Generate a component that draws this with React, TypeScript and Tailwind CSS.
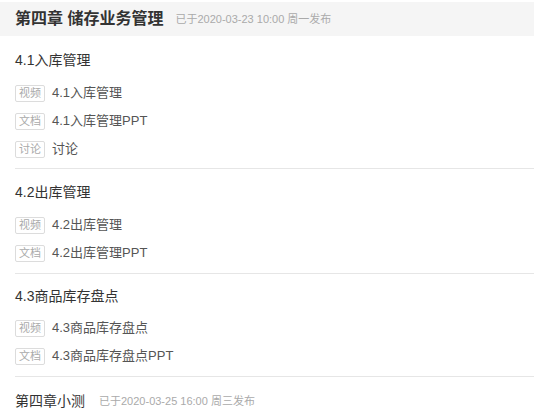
const font = { fontFamily: '"Liberation Sans", "Noto Sans CJK SC", sans-serif' }

type Item = { tag: string; title: string }
type Section = { title: string; items: Item[]; pt: string; mb: string; mt: string }

const sections: Section[] = [
  {
    title: '4.1入库管理',
    pt: 'pt-[14px]',
    mb: 'mb-[9px]',
    mt: 'mt-[5px]',
    items: [
      { tag: '视频', title: '4.1入库管理' },
      { tag: '文档', title: '4.1入库管理PPT' },
      { tag: '讨论', title: '讨论' },
    ],
  },
  {
    title: '4.2出库管理',
    pt: 'pt-[13px]',
    mb: 'mb-[9px]',
    mt: 'mt-[6px]',
    items: [
      { tag: '视频', title: '4.2出库管理' },
      { tag: '文档', title: '4.2出库管理PPT' },
    ],
  },
  {
    title: '4.3商品库存盘点',
    pt: 'pt-[12px]',
    mb: 'mb-[8px]',
    mt: 'mt-[6px]',
    items: [
      { tag: '视频', title: '4.3商品库存盘点' },
      { tag: '文档', title: '4.3商品库存盘点PPT' },
    ],
  },
]

function Row({ item }: { item: Item }) {
  return (
    <div className="flex h-[28px] items-center">
      <span className="flex h-[17px] w-[30px] items-center justify-center rounded-[2px] border border-[#dcdcdc] text-[11px] leading-none text-[#aaaaaa]">
        {item.tag}
      </span>
      <span className="ml-[7px] text-[13px] text-[#555555]">{item.title}</span>
    </div>
  )
}

export default function App() {
  return (
    <div className="h-[420px] w-[534px] overflow-hidden bg-white" style={font}>
      {/* 章节头 */}
      <div className="mt-[2px] flex h-[34px] items-center bg-[#f5f5f5] pl-[15px]">
        <span className="text-[16px] font-bold text-[#333333]">第四章 储存业务管理</span>
        <span className="ml-[12px] text-[11px] text-[#aaaaaa]">已于2020-03-23 10:00 周一发布</span>
      </div>

      <div className="pl-[15px]">
        {sections.map((s, i) => (
          <div key={i} className={s.pt}>
            <div className={`${s.mb} h-[20px] text-[14px] leading-[20px] text-[#333333]`}>{s.title}</div>
            {s.items.map((it, j) => (
              <Row key={j} item={it} />
            ))}
            <div className={`${s.mt} h-[1px] bg-[#e6e6e6]`} />
          </div>
        ))}

        <div className="flex items-center pt-[13px]">
          <span className="text-[14px] leading-[22px] text-[#333333]">第四章小测</span>
          <span className="ml-[14px] text-[11px] text-[#aaaaaa]">已于2020-03-25 16:00 周三发布</span>
        </div>
      </div>
    </div>
  )
}
